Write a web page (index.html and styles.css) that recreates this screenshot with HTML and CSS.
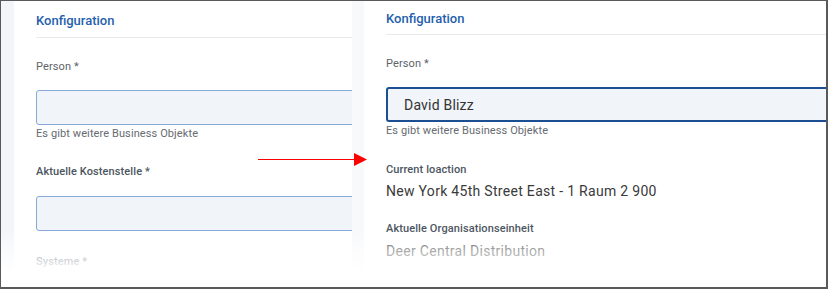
FILE: index.html
```html
<!DOCTYPE html>
<html lang="de">
<head>
    <meta charset="UTF-8">
    <title>Konfiguration – vorher / nachher</title>
    <link rel="stylesheet" href="styles.css">
</head>
<body>

<div class="frame">
    <section class="panel panel-back">
        <div class="card card-back">
            <h2 class="card-title">Konfiguration</h2>
            <div class="field">
                <div class="label">Person *</div>
                <div class="input"></div>
                <div class="hint">Es gibt weitere Business Objekte</div>
            </div>
            <div class="field field-cost">
                <div class="label label-strong">Aktuelle Kostenstelle *</div>
                <div class="input"></div>
            </div>
            <div class="field field-sys">
                <div class="label label-strong">Systeme *</div>
            </div>
        </div>
    </section>

    <section class="panel panel-front">
        <div class="card card-front">
            <h2 class="card-title">Konfiguration</h2>
            <div class="field">
                <div class="label">Person *</div>
                <div class="input input-focus">David Blizz</div>
                <div class="hint">Es gibt weitere Business Objekte</div>
            </div>
            <div class="info">
                <div class="label label-strong">Current loaction</div>
                <div class="value">New York 45th Street East - 1 Raum 2 900</div>
            </div>
            <div class="info info-org">
                <div class="label label-strong">Aktuelle Organisationseinheit</div>
                <div class="value">Deer Central Distribution</div>
            </div>
        </div>
    </section>

    <svg class="arrow" width="112" height="16" viewBox="0 0 112 16">
        <line x1="0" y1="7.5" x2="98" y2="7.5" stroke="#f00" stroke-width="1.2"/>
        <polygon points="96,1 109,7.5 96,14" fill="#f00"/>
    </svg>

    <div class="fade"></div>
</div>

</body>
</html>
```

FILE: styles.css
```css
body { margin: 0; font-family: Roboto, "Liberation Sans", sans-serif; background: #fff; }
.frame { position: relative; width: 828px; height: 289px; box-sizing: border-box; border: 1px solid #595959; border-right-width: 2px; border-bottom-width: 2px; display: flex; overflow: hidden; }

.panel { height: 100%; background: #f3f5f9; display: flex; }
.panel-back { width: 351px; padding-left: 13px; box-sizing: border-box; }
.panel-front { flex: 1; padding-left: 12px; background: linear-gradient(to right, #f8f9fb, #eff2f7); }

.card { flex: 1; background: #fff; padding-left: 22px; overflow: hidden; }
.card-back { padding-top: 12px; }
.card-front { padding-top: 10px; }

.card-title { margin: 0 0 22px; font-size: 13px; line-height: 16px; font-weight: 500; color: #1f5fad; padding-bottom: 7px; border-bottom: 1px solid #e8eaed; }
.card-back .card-title { padding-bottom: 8px; }

.label { font-size: 11px; line-height: 14px; letter-spacing: 0.1px; color: #5d6369; }
.label-strong { font-weight: 500; color: #4c5661; }

.input { height: 35px; margin-top: 16px; box-sizing: border-box; border: 1px solid #86a9d9; border-radius: 3px; background: #f1f4f9; margin-right: -20px; display: flex; align-items: center; padding-left: 17px; font-size: 14px; letter-spacing: 0.2px; color: #333; }
.input-focus { border: 2px solid #1c4f91; padding-left: 16px; }

.hint { margin-top: 2px; font-size: 11px; line-height: 14px; letter-spacing: 0.1px; color: #666b70; }

.field-cost { margin-top: 24px; }
.field-cost .input { margin-top: 17px; }
.field-sys { margin-top: 24px; }

.info { margin-top: 25px; }
.info-org { margin-top: 22px; }
.value { margin-top: 5px; font-size: 14px; line-height: 18px; letter-spacing: 0.3px; color: #3a3a3a; }
.info-org .value { margin-top: 6px; }

.arrow { position: absolute; left: 257px; top: 151px; }
.fade { position: absolute; left: 0; right: 0; bottom: 0; height: 57px; background: linear-gradient(to bottom, rgba(255,255,255,0), rgba(255,255,255,0.55) 35%, rgba(255,255,255,0.78) 56%, #fff 74%); }
```
